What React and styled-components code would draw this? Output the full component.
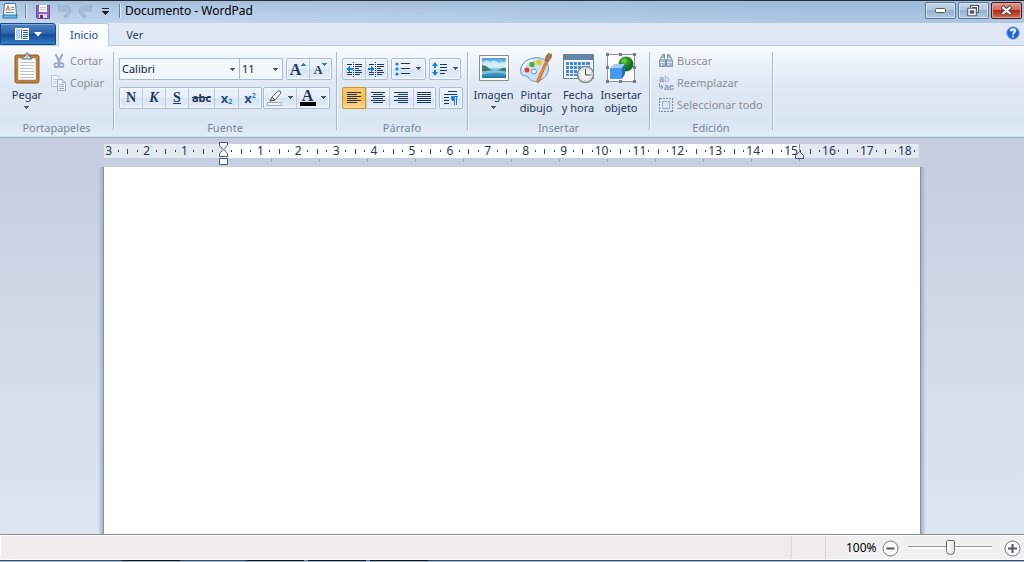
import React from 'react';
import styled, { createGlobalStyle, css } from 'styled-components';

const Global = createGlobalStyle`
  * { box-sizing: border-box; }
  body { margin: 0; background: #fff; font: 11px/14px "Noto Sans", "Open Sans", sans-serif; color: #1e395b; }
  button, select, input { font: inherit; color: inherit; margin: 0; padding: 0; border: 0; background: none; }
  svg { display: block; flex: none; }
`;

const Window = styled.div`
  display: flex;
  flex-direction: column;
  height: 100vh;
  min-height: 400px;
  margin-right: 3px;
  overflow: hidden;
`;

/* Title bar */
const TitleBar = styled.header`
  display: flex;
  align-items: center;
  height: 23px;
  flex: none;
  padding: 0 2px 2px;
  border-top: 1px solid #2c2e33;
  background: linear-gradient(90deg, #c3d6eb00 0, #c3d6eb00 20%, #8fb1d566 80%), linear-gradient(#a5c0dd, #b9cfe8 60%, #c2d6eb);
`;
const TitleDivider = styled.span`
  width: 2px;
  height: 14px;
  border-left: 1px solid #6e8199;
  border-right: 1px solid #dfeaf5;
  margin: 0 ${p => p.$right}px 0 ${p => p.$left}px;
`;
const QuickButton = styled.button`
  display: flex;
  align-items: center;
  justify-content: center;
  width: ${p => p.$w || 21}px;
  height: 20px;
`;
const Title = styled.h1`
  flex: 1;
  margin: 0;
  font-size: 12px;
  line-height: 18px;
  font-weight: 400;
  color: #000;
  white-space: nowrap;
`;
const Caption = styled.div`
  display: flex;
  gap: 2px;
  align-self: flex-start;
  margin-top: 1px;
`;
const CaptionButton = styled.button`
  display: flex;
  align-items: center;
  justify-content: center;
  width: 31px;
  height: 17px;
  border: 1px solid ${p => (p.$close ? '#4a1520' : '#5b7493')};
  border-radius: 2px;
  box-shadow: inset 0 0 0 1px ${p => (p.$close ? '#e2a29a' : '#d3e2f1')};
  background: ${p => (p.$close
    ? 'linear-gradient(#dc9c90, #cb6655 48%, #b12a17 50%, #cd6f4e)'
    : 'linear-gradient(#c4d5e8, #b0c6de 48%, #96b0cd 50%, #afc8e2)')};
`;

/* Tabs */
const Tabs = styled.nav`
  display: flex;
  height: 23px;
  flex: none;
  background: #dfe8f4;
  border-bottom: 1px solid #bacbdf;
`;
const FileButton = styled.button`
  display: flex;
  align-items: center;
  justify-content: center;
  gap: 5px;
  width: 56px;
  height: 22px;
  border: 1px solid #1b4785;
  border-radius: 0 3px 0 0;
  box-shadow: inset 0 1px 0 #83abd9;
  background: linear-gradient(#4b80c0, #2b62a9 48%, #174b94 52%, #2f7cc5);
`;
const Tab = styled.button`
  height: 23px;
  margin-left: ${p => (p.$active ? 2 : 4)}px;
  padding: 0 12px 1px;
  border: 1px solid transparent;
  border-bottom: 0;
  color: #1e395b;
  ${p => p.$active && css`
    padding: 0 10px 1px 11px;
    background: #fafdff;
    border-color: #bacbdf;
    border-radius: 3px 3px 0 0;
    color: #1e4a8a;
  `}
`;
const Help = styled.button`
  margin: 0 4px 2px auto;
`;

/* Ribbon */
const Ribbon = styled.section`
  display: flex;
  flex: none;
  height: 92px;
  padding-top: 6px;
  background: linear-gradient(#f8fcff, #eaf1f9 22%, #dfe8f4 42%, #dae5f3 85%, #e3edf8);
  border-bottom: 1px solid #9aaec3;
  box-shadow: inset 0 -1px 0 #cfe0ee;
`;
const Group = styled.section`
  display: flex;
  flex-direction: column;
  justify-content: space-between;
  flex: none;
  width: ${p => p.$w}px;
  height: 78px;
  padding-left: ${p => p.$pad}px;
  border-right: 1px solid #a9bbd2;
  box-shadow: 1px 0 0 #f3f8fd;
`;
const GroupLabel = styled.h2`
  margin: 0 0 -5px -${p => p.$pad}px;
  font-size: 11px;
  line-height: 14px;
  font-weight: 400;
  text-align: center;
  color: #76869d;
`;
const Row = styled.div`
  display: flex;
  gap: ${p => p.$gap || 0}px;
`;
const ToolRows = styled.div`
  display: flex;
  flex-direction: column;
  gap: 7px;
  padding-top: 6px;
`;
const BigButton = styled.button`
  display: flex;
  flex-direction: column;
  align-items: center;
  width: ${p => p.$w}px;
  line-height: 13px;
  white-space: pre;
  color: #1e395b;
  > svg:first-child { margin-bottom: 4px; }
  > svg + span + svg { margin-top: 5px; }
`;
const SmallList = styled.div`
  display: flex;
  flex-direction: column;
`;
const SmallButton = styled.button`
  display: flex;
  align-items: center;
  gap: 3px;
  height: 22px;
  margin-top: ${p => (p.$first ? -2 : 0)}px;
  color: #8c8f95;
  white-space: nowrap;
`;
const ComboBox = styled.label`
  position: relative;
  display: block;
  width: ${p => p.$w}px;
  height: 22px;
  margin-left: ${p => (p.$joined ? -1 : 0)}px;
  border: 1px solid #a9bcd5;
  background: #f2f7fc;
  > svg { position: absolute; right: 3px; top: 9px; pointer-events: none; }
`;
const Select = styled.select`
  appearance: none;
  width: 100%;
  height: 20px;
  padding-left: 2px;
  color: #10233d;
  outline: 0;
`;
const ButtonSet = styled.div`
  display: flex;
  height: 22px;
  border: 1px solid #a9bcd5;
  border-radius: 2px;
  box-shadow: inset 0 0 0 1px #f3f8fd;
  background: linear-gradient(#edf3fa, #e6eef8 48%, #d8e4f2 52%, #e4edf8);
`;
const Tool = styled.button`
  display: flex;
  align-items: center;
  justify-content: center;
  gap: 5px;
  width: ${p => p.$w || 24}px;
  height: 20px;
  color: #1e395b;
  & + & { border-left: 1px solid #bccbdf; }
  ${p => p.$on && css`
    height: 22px;
    margin: -1px 0 0 -1px;
    border: 1px solid #c29b29;
    border-radius: 2px 0 0 2px;
    background: linear-gradient(#fbc978, #fdbd58 48%, #fdb747 52%, #ffd991);
  `}
`;
const Letter = styled.span`
  font-family: "Liberation Serif", serif;
  font-size: ${p => p.$size || 14}px;
  line-height: 16px;
  font-weight: 700;
  font-style: ${p => (p.$italic ? 'italic' : 'normal')};
  text-decoration: ${p => p.$line || 'none'};
`;
const Abc = styled.span`
  font-size: 11px;
  line-height: 14px;
  font-weight: 700;
  text-decoration: line-through;
`;
const Script = styled.span`
  display: flex;
  align-items: ${p => (p.$up ? 'flex-start' : 'flex-end')};
  font-size: 13px;
  line-height: 13px;
  font-weight: 700;
  color: #2a5078;
  > i { font-size: 7px; line-height: 7px; font-style: normal; color: #1583dc; }
`;
const GrowLetter = styled.span`
  display: flex;
  align-items: flex-start;
  height: 20px;
  padding-top: 3px;
  > svg { margin-top: 1px; }
`;
const ColorLetter = styled.span`
  display: block;
  width: 16px;
  height: 16px;
  border-bottom: 4px solid #000;
  font: 700 16px/12px "Liberation Serif", serif;
  text-align: center;
`;

/* Document area */
const Workspace = styled.main`
  display: flex;
  flex-direction: column;
  align-items: center;
  flex: 1;
  min-height: 0;
  padding-top: 6px;
  background: linear-gradient(#c4cddf, #c6d0e1 12%, #dde7f2);
`;
const RulerBox = styled.div`
  position: relative;
  width: 816px;
  max-width: 100%;
  height: 23px;
  flex: none;
`;
const Ruler = styled.div`
  height: 14px;
  margin-right: 1px;
  overflow-x: clip;
  overflow-y: visible;
  background: linear-gradient(90deg, #e4e8f0 119px, #fff 119px 695px, #e4e8f0 695px);
`;
const Track = styled.div`
  display: grid;
  grid-template-columns: repeat(88, 1fr);
  width: 834px;
  height: 14px;
  margin-left: -19px;
  align-items: center;
  justify-items: center;
  font-size: 12px;
  line-height: 14px;
`;
const Mark = styled.span`
  display: flex;
  justify-content: center;
  width: ${p => (p.$text ? 'auto' : '1px')};
  height: ${p => (p.$text ? 14 : p.$tall ? 5 : 2)}px;
  background: ${p => (p.$text ? 'none' : '#29456b')};
  margin: 0 -8px;
`;
const TabStops = styled.div`
  height: 2px;
  margin: 1px 120px 0 119px;
  background: linear-gradient(90deg, #8e9bb1 1px, transparent 1px) 0 0 / 48px 2px;
`;
const Marker = styled.span`
  position: absolute;
  left: ${p => p.$x}px;
  top: ${p => p.$y}px;
`;
const PageWrap = styled.div`
  display: flex;
  flex: 1;
  width: 828px;
  max-width: 100%;
  min-height: 0;
`;
const Edge = styled.span`
  width: 6px;
  background: linear-gradient(${p => (p.$left ? 'to left' : 'to right')}, #8491a8 1px, #a3b0c6 1px, #a3b0c600);
`;
const Page = styled.article`
  flex: 1;
  background: #fff;
  outline: 0;
`;

/* Status bar */
const StatusBar = styled.footer`
  display: flex;
  align-items: flex-end;
  justify-content: flex-end;
  flex: none;
  height: 26px;
  border: 1px solid #fff;
  border-right: 0;
  border-top: 1px solid #8f8c91;
  box-shadow: inset 0 1px 0 #fff;
  background: #f0eceb;
  color: #000;
`;
const StatusCell = styled.span`
  width: 34px;
  height: 23px;
  border-left: 1px solid #dcd7d7;
`;
const Zoom = styled.div`
  display: flex;
  align-items: center;
  height: 23px;
  padding: 1px 3px 0 20px;
  border-left: 1px solid #dcd7d7;
  background: linear-gradient(90deg, #f0eceb, #f0f0f0 24px);
`;
const ZoomText = styled.label`
  width: 36px;
  font-size: 12px;
  white-space: nowrap;
`;
const Slider = styled.input`
  appearance: none;
  width: 84px;
  height: 18px;
  margin: -2px 12px 0 9px;
  &::-webkit-slider-runnable-track {
    height: 3px;
    border-top: 1px solid #9c9c9c;
    background: #fff;
  }
  &::-webkit-slider-thumb {
    appearance: none;
    width: 9px;
    height: 15px;
    margin-top: -7px;
    border: 1px solid #6b6b6b;
    border-radius: 2px 2px 5px 5px;
    background: linear-gradient(90deg, #fff, #e2e2e2);
  }
`;
const TaskbarEdge = styled.div`
  height: 2px;
  flex: none;
  background:
    linear-gradient(90deg, transparent 122px, #101318 122px 180px, transparent 180px 246px, #101318 246px 304px, #70879f 304px 308px, #101318 308px 366px, #70879f 366px 370px, #101318 370px 428px, transparent 428px) 0 0 / 100% 1px no-repeat,
    linear-gradient(#39495d 1px, #9db9d1 1px);
`;

const Arrow = ({ fill = '#46566e' }) => (
  <svg width="6" height="4" viewBox="0 0 6 4"><path d="M0 0h5v1H4v1H3v1H2V2H1V1H0z" fill={fill} shapeRendering="crispEdges" /></svg>
);
const FileGlyph = () => (
  <svg width="14" height="12" shapeRendering="crispEdges"><path d="M0 0h14v12H0z" fill="#fff" /><path d="M1 1h4v10H1z" fill="#b8d0ea" /><path d="M6 1h1v10H6z" fill="#4a78b4" /><path d="M8 2h5M8 4h5M8 6h5M8 8h5M8 10h4" stroke="#24549a" transform="translate(0 .5)" /></svg>
);
const AppGlyph = () => (
  <svg width="16" height="16"><path d="M2.500.500h11l1 11v3H1.500v-3z" fill="#f6fbff" stroke="#387cb5" /><path d="M1 12h14v3H1z" fill="#77b7df" stroke="#2871a8" /><path d="M4 8l2-5 2 5M5 6h2" stroke="#e57c22" fill="none" strokeWidth="1.200" /><path d="M9 4.500h3M9 6.500h3M4 9.500h8" stroke="#5191c8" /></svg>
);
const SaveGlyph = () => (
  <svg width="14" height="15"><path d="M.500 1.500h13v13h-12l-1-1z" fill="#9a66bd" stroke="#73449a" /><path d="M3 1h8v7H3z" fill="#f7f7fc" /><path d="M4 3.500h6M4 5.500h6" stroke="#c9c4d8" /><path d="M3 10h8v4H3z" fill="#d9d8e4" /><path d="M4 11h3v3H4z" fill="#51356e" /></svg>
);
const UndoGlyph = ({ flip }) => (
  <svg width="15" height="16" viewBox="0 0 15 16"><g transform={flip ? 'translate(15 0) scale(-1 1)' : undefined}><path d="M1 1l1 7h7L6.500 5.700C10 5 11 7 10 9.500c-.6 1.600-2 3-3 3.700l1 1.700c3-1 5.700-4 5.700-7C13.700 3 8 1 4 3.700z" fill="#a6bdd8" stroke="#93abc8" strokeWidth=".8" /></g></svg>
);
const CustomizeGlyph = () => (
  <svg width="7" height="7" shapeRendering="crispEdges"><path d="M0 0h7v1H0zM0 3h7v1H6v1H5v1H4v1H3V6H2V5H1V4H0z" fill="#18222f" /></svg>
);
const HelpGlyph = () => (
  <svg width="14" height="14"><circle cx="7" cy="7" r="6.300" fill="#2264d3" stroke="#8fb2e2" /><path d="M3 4a5 5 0 0 1 8 0c-1 2-6 2-8 0" fill="#79aaf2" /><path d="M5 5.200c.2-2.500 4.300-2.300 4 .1C8.800 6.700 7 6.700 7 8.600M7 9.800v1.500" fill="none" stroke="#fff" strokeWidth="1.700" /></svg>
);
const PasteGlyph = () => (
  <svg width="26" height="32"><rect x="1" y="3" width="24" height="28" rx="2" fill="#b9803a" stroke="#8a5c23" /><path d="M4 6h18v22H4z" fill="#fdfefe" stroke="#9d7a45" strokeWidth=".5" /><path d="M6 10.500h14M6 13.500h14M6 16.500h14M6 19.500h14M6 22.500h14M6 25.500h14" stroke="#b9c5c7" /><path d="M8 7c0-2 2-2 3-3 .5-4 4-4 4 0 1 1 3 1 3 3z" fill="#d9dde1" stroke="#5a6068" /><circle cx="13" cy="3.300" r="1" fill="#fff" stroke="#6b7178" strokeWidth=".6" /></svg>
);
const CutGlyph = () => (
  <svg width="16" height="16" fill="none" stroke="#97a9c2"><path d="M4.500 1l4.500 9M11.500 1L7 10" strokeWidth="2" /><circle cx="5.500" cy="12.200" r="2" strokeWidth="1.700" /><circle cx="10.500" cy="12.200" r="2" strokeWidth="1.700" /></svg>
);
const CopyGlyph = () => (
  <svg width="16" height="16" stroke="#9fb0c8" fill="#edf2f9"><path d="M.5.500h6l3 3v8h-9z" stroke="#b9c6d8" /><path d="M2 4.500h5M2 6.500h5M2 8.500h3" stroke="#c2cddd" /><path d="M6.500 4.500h5l3 3v8h-8z" /><path d="M11.500 4.500v3h3M8 9.500h5M8 11.500h5M8 13.500h5" /></svg>
);
const ImageGlyph = () => (
  <svg width="32" height="32"><defs><linearGradient id="sky" x2="0" y2="1"><stop stopColor="#3f9ade" /><stop offset=".45" stopColor="#d9f1fb" /><stop offset=".6" stopColor="#6fb3cf" /><stop offset="1" stopColor="#1b77b4" /></linearGradient></defs><path d="M1.500 3.500h29v25h-29z" fill="#fff" stroke="#8b8f93" /><path d="M4 6h24v20H4z" fill="url(#sky)" /><path d="M5 10q4-3 7 0 6-3 8 1 5-1 8-1v4H4z" fill="#e7f6fc" opacity=".7" /><path d="M4 13l4 1 4 3 4 2H4zM28 16l-4 0-5 3h9z" fill="#3d7a72" /><path d="M4 20q12-4 24 0v2q-12-3-24 1z" fill="#8ccfe2" opacity=".7" /></svg>
);
const PaintGlyph = () => (
  <svg width="32" height="32"><path d="M14 6C5 7-1 14 1 21c1 4 5 2 7 4 2 3 4 5 9 4 8-1 13-9 11-16-2-6-8-8-14-7z" fill="#c9e1f3" stroke="#6897bd" /><path d="M13 8C7 9 3 14 3 18" fill="none" stroke="#f1f9ff" strokeWidth="2" /><circle cx="7" cy="18" r="2.500" fill="#e4402f" /><circle cx="12" cy="12.500" r="2.700" fill="#51af37" /><circle cx="19" cy="10.500" r="2.700" fill="#f0c21c" /><circle cx="14" cy="19.500" r="2.500" fill="#eef6fc" stroke="#5b91bb" /><path d="M26 8l2 1-9 21q-3 2-2-2z" fill="#f08831" stroke="#c95d1a" strokeWidth=".7" /><path d="M25 8l1-4 3-3 1 2 2-1-1 4-3 4z" fill="#aa7444" stroke="#80532e" strokeWidth=".6" /></svg>
);
const DateGlyph = () => (
  <svg width="33" height="32"><path d="M1.500 2.500h30v24h-30z" fill="#f5faff" stroke="#64809e" /><path d="M2 3h29v5H2z" fill="#6684a5" /><path d="M4 10h24v14H4z" fill="#4889d5" /><path d="M4 13.500h24M4 17.500h24M4 21.500h24M7.500 10v14M11.500 10v14M15.500 10v14M19.500 10v14M23.500 10v14" stroke="#e4f1ff" /><circle cx="23.500" cy="22.500" r="8" fill="#f0f1f1" stroke="#858a8e" strokeWidth="1.500" /><circle cx="23.500" cy="22.500" r="6" fill="none" stroke="#8d9399" strokeDasharray="1 2.140" /><path d="M23.500 17v6h5" fill="none" stroke="#434a50" /></svg>
);
const ObjectGlyph = () => (
  <svg width="32" height="32"><defs><radialGradient id="ball" cx=".4" cy=".3"><stop stopColor="#8ad36b" /><stop offset=".5" stopColor="#2b9b27" /><stop offset="1" stopColor="#147019" /></radialGradient></defs><path d="M2.500 2.500h27v27h-27z" fill="#fdfdfe" stroke="#8e9297" /><circle cx="21" cy="12" r="7.500" fill="url(#ball)" /><path d="M5 16l4-4h11l-3 4z" fill="#a0d0fa" /><path d="M5 16h12v11H5z" fill="#479aec" /><path d="M17 16l3-4v10l-3 5z" fill="#1f6bbd" /><path d="M1 1h3v3H1zM14 1h3v3h-3zM28 1h3v3h-3zM1 14h3v3H1zM28 14h3v3h-3zM1 28h3v3H1zM14 28h3v3h-3zM28 28h3v3h-3z" fill="#777d84" /></svg>
);
const FindGlyph = () => (
  <svg width="16" height="16" fill="#a7b7cc" stroke="#8195b1"><path d="M3.500 3.500l1-2h2v4l1 1v7h-6v-6zM12.500 3.500l-1-2h-2v4l-1 1v7h6v-6z" /><path d="M2 9.500h5M9 9.500h5M3 5.500h3M10 5.500h3" stroke="#e3eaf3" /><path d="M3.500 11v1M10.500 11v1" stroke="#f4f8fc" /></svg>
);
const ReplaceGlyph = () => (
  <svg width="16" height="20" fontFamily="Liberation Sans" fontWeight="700" fontSize="9" fill="#8195b1"><text x="1" y="9">a<tspan fill="#b4c1d3">b</tspan></text><text x="6" y="17">ac</text><path d="M1.500 10v4h3M3 12l2 2-2 2" fill="none" stroke="#8195b1" /></svg>
);
const SelectGlyph = () => (
  <svg width="16" height="16" shapeRendering="crispEdges"><path d="M1.500 1.500h13v13h-13z" fill="none" stroke="#7589a7" strokeDasharray="2 1" /><path d="M4.500 4.500h7v7h-7z" fill="#dbe4f0" stroke="#a2b1c6" /></svg>
);
const Lines = ({ kind }) => {
  const rows = [14, 10, 14, 10, 14, 10];
  return (
    <svg width="15" height="13" shapeRendering="crispEdges">{rows.map((w, i) => {
      const width = kind === 'full' ? 14 : w;
      const x = kind === 'right' ? 14 - width : kind === 'center' ? (14 - width) / 2 : 0;
      return <rect key={i} x={x} y={i * 2} width={width} height="1" fill="#1e395b" />;
    })}</svg>
  );
};
const IndentGlyph = ({ right }) => (
  <svg width="17" height="15" shapeRendering="crispEdges"><path d="M1 2.500h5M9 2.500h7M9 4.500h7M9 6.500h4M9 8.500h6M1 10.500h5M9 10.500h7M1 12.500h5M9 12.500h5" stroke="#1e395b" /><path d="M7.500 0v15" stroke="#1e395b" strokeDasharray="1 1" /><path d={right ? 'M0 6h3V4l4 3-4 3V8H0z' : 'M7 6H4V4L0 7l4 3V8h3z'} fill="#1583dc" /></svg>
);
const BulletsGlyph = () => (
  <svg width="16" height="14"><circle cx="2" cy="2" r="1.600" fill="#1583dc" /><circle cx="2" cy="7" r="1.600" fill="#1583dc" /><circle cx="2" cy="12" r="1.600" fill="#1583dc" /><path d="M6 1.500h9M6 6.500h9M6 11.500h9" stroke="#1e395b" /></svg>
);
const SpacingGlyph = () => (
  <svg width="16" height="16"><path d="M0 5l3-4 3 4H4v2H2V5zM0 11l3 4 3-4H4V9H2v2z" fill="#1583dc" /><path d="M8 3.500h7M8 6.500h7M8 9.500h7M8 12.500h5" stroke="#1e395b" /></svg>
);
const ParagraphGlyph = () => (
  <svg width="15" height="14" shapeRendering="crispEdges"><path d="M4 .500h9M0 3.500h13M0 6.500h5M0 9.500h5M0 12.500h5" stroke="#1e395b" /><path d="M7 5h7v1h-1v8h-1V6h-1v8h-1v-4H8l-1-1z" fill="#1583dc" /></svg>
);
const GrowGlyph = ({ down }) => (
  <svg width="5" height="3" shapeRendering="crispEdges"><path d={down ? 'M0 0h5v1H4v1H3v1H2V2H1V1H0z' : 'M2 0h1v1h1v1h1v1H0V2h1V1h1z'} fill="#1583dc" /></svg>
);
const HighlightGlyph = () => (
  <svg width="17" height="17"><path d="M4 11l2-4 6-6q3-1 3 2l-6 7z" fill="#f4f7fa" stroke="#596c85" /><path d="M4 11l2-4 3 3z" fill="#dcc45c" stroke="#5d6672" /><path d="M1.500 12.500h14v3h-14z" fill="#edf2f8" stroke="#9fb0c8" /></svg>
);
const ZoomGlyph = ({ plus }) => (
  <svg width="17" height="17"><circle cx="8.500" cy="8.500" r="7.500" fill="#f8f8f8" stroke="#77777b" /><path d={plus ? 'M4 8.500h9M8.500 4v9' : 'M4.500 8.500h8'} stroke="#55565a" strokeWidth="2" /></svg>
);

const centimetres = Array.from({ length: 22 }, (_, i) => i - 3);

export default function App() {
  return (
    <>
      <Global />
      <Window>
        <TitleBar>
          <AppGlyph />
          <TitleDivider $left={7} $right={5} />
          <QuickButton aria-label="Guardar"><SaveGlyph /></QuickButton>
          <QuickButton aria-label="Deshacer" $w={22}><UndoGlyph /></QuickButton>
          <QuickButton aria-label="Rehacer" $w={20}><UndoGlyph flip /></QuickButton>
          <QuickButton aria-label="Personalizar" $w={20}><CustomizeGlyph /></QuickButton>
          <TitleDivider $left={4} $right={4} />
          <Title>Documento - WordPad</Title>
          <Caption>
            <CaptionButton aria-label="Minimizar"><svg width="12" height="5"><rect x=".5" y=".5" width="10" height="4" rx="1" fill="#fff" stroke="#4c5a6c" /></svg></CaptionButton>
            <CaptionButton aria-label="Restaurar"><svg width="13" height="12" fill="none"><path d="M4.500 1.500h6v5h-6z" stroke="#4c5a6c" strokeWidth="3" /><path d="M4.500 1.500h6v5h-6z" stroke="#fff" /><path d="M2 4.500h6v5H2z" stroke="#4c5a6c" strokeWidth="3.500" /><path d="M2 4.500h6v5H2z" fill="#4c5a6c" stroke="#fff" strokeWidth="1.500" /></svg></CaptionButton>
            <CaptionButton aria-label="Cerrar" $close><svg width="13" height="11"><path d="M2 1.500l9 8M11 1.500l-9 8" stroke="#593c43" strokeWidth="4" /><path d="M2.500 2l8 7M10.500 2l-8 7" stroke="#fff" strokeWidth="2.200" /></svg></CaptionButton>
          </Caption>
        </TitleBar>
        <Tabs>
          <FileButton aria-label="Menú"><FileGlyph /><svg width="8" height="5"><path d="M0 0h8L4 4.500z" fill="#fff" /></svg></FileButton>
          <Tab $active>Inicio</Tab>
          <Tab>Ver</Tab>
          <Help aria-label="Ayuda"><HelpGlyph /></Help>
        </Tabs>
        <Ribbon>
          <Group $w={114} $pad={5}>
            <Row $gap={2}>
              <BigButton $w={44}><PasteGlyph /><span>Pegar</span><Arrow /></BigButton>
              <SmallList>
                <SmallButton $first><CutGlyph />Cortar</SmallButton>
                <SmallButton><CopyGlyph />Copiar</SmallButton>
              </SmallList>
            </Row>
            <GroupLabel $pad={5}>Portapapeles</GroupLabel>
          </Group>
          <Group $w={223} $pad={5}>
            <ToolRows>
              <Row $gap={3}>
                <Row>
                  <ComboBox $w={121}><Select aria-label="Fuente"><option>Calibri</option></Select><Arrow /></ComboBox>
                  <ComboBox $w={44} $joined><Select aria-label="Tamaño"><option>11</option></Select><Arrow /></ComboBox>
                </Row>
                <ButtonSet>
                  <Tool $w={22} aria-label="Agrandar fuente"><GrowLetter><Letter $size={16}>A</Letter><GrowGlyph /></GrowLetter></Tool>
                  <Tool $w={22} aria-label="Reducir fuente"><GrowLetter><Letter $size={12}>A</Letter><GrowGlyph down /></GrowLetter></Tool>
                </ButtonSet>
              </Row>
              <Row $gap={1}>
                <ButtonSet>
                  <Tool $w={22}><Letter>N</Letter></Tool>
                  <Tool $w={23}><Letter $italic>K</Letter></Tool>
                  <Tool $w={23}><Letter $line="underline">S</Letter></Tool>
                  <Tool $w={26}><Abc>abc</Abc></Tool>
                  <Tool $w={24}><Script>x<i>2</i></Script></Tool>
                  <Tool $w={23}><Script $up>x<i>2</i></Script></Tool>
                </ButtonSet>
                <ButtonSet>
                  <Tool $w={32} aria-label="Resaltar"><HighlightGlyph /><Arrow /></Tool>
                  <Tool $w={33} aria-label="Color de texto"><ColorLetter>A</ColorLetter><Arrow /></Tool>
                </ButtonSet>
              </Row>
            </ToolRows>
            <GroupLabel $pad={5}>Fuente</GroupLabel>
          </Group>
          <Group $w={131} $pad={5}>
            <ToolRows>
              <Row $gap={3}>
                <ButtonSet>
                  <Tool $w={22} aria-label="Reducir sangría"><IndentGlyph /></Tool>
                  <Tool $w={22} aria-label="Aumentar sangría"><IndentGlyph right /></Tool>
                </ButtonSet>
                <ButtonSet><Tool $w={33} aria-label="Lista"><BulletsGlyph /><Arrow /></Tool></ButtonSet>
                <ButtonSet><Tool $w={30} aria-label="Interlineado"><SpacingGlyph /><Arrow /></Tool></ButtonSet>
              </Row>
              <Row $gap={3}>
                <ButtonSet>
                  <Tool $on aria-label="Izquierda"><Lines kind="left" /></Tool>
                  <Tool $w={23} aria-label="Centro"><Lines kind="center" /></Tool>
                  <Tool aria-label="Derecha"><Lines kind="right" /></Tool>
                  <Tool $w={22} aria-label="Justificar"><Lines kind="full" /></Tool>
                </ButtonSet>
                <ButtonSet><Tool $w={22} aria-label="Párrafo"><ParagraphGlyph /></Tool></ButtonSet>
              </Row>
            </ToolRows>
            <GroupLabel $pad={5}>Párrafo</GroupLabel>
          </Group>
          <Group $w={182} $pad={4}>
            <Row>
              <BigButton $w={43}><ImageGlyph /><span>Imagen</span><Arrow /></BigButton>
              <BigButton $w={42}><PaintGlyph /><span>{'Pintar\ndibujo'}</span></BigButton>
              <BigButton $w={42}><DateGlyph /><span>{'Fecha\ny hora'}</span></BigButton>
              <BigButton $w={44}><ObjectGlyph /><span>{'Insertar\nobjeto'}</span></BigButton>
            </Row>
            <GroupLabel $pad={4}>Insertar</GroupLabel>
          </Group>
          <Group $w={123} $pad={8}>
            <SmallList>
              <SmallButton $first><FindGlyph />Buscar</SmallButton>
              <SmallButton><ReplaceGlyph />Reemplazar</SmallButton>
              <SmallButton><SelectGlyph />Seleccionar todo</SmallButton>
            </SmallList>
            <GroupLabel $pad={8}>Edición</GroupLabel>
          </Group>
        </Ribbon>
        <Workspace>
          <RulerBox>
            <Ruler>
              <Track>
                {centimetres.map(n => (
                  <React.Fragment key={n}>
                    <Mark $tall /><Mark /><Mark $text>{n === 0 ? '' : Math.abs(n)}</Mark><Mark />
                  </React.Fragment>
                ))}
              </Track>
            </Ruler>
            <TabStops />
            <Marker $x={115} $y={-2}>
              <svg width="9" height="24" fill="#f3f5f8" stroke="#49597a"><path d="M.5.500h8v3l-3.500 4 3.500 4v3h-8v-3l3.500-4-3.500-4zM.5 16.500h8v6h-8z" /></svg>
            </Marker>
            <Marker $x={691} $y={0}>
              <svg width="9" height="15" fill="#e6eaf1" stroke="#49597a"><path d="M4.500 0v7" stroke="#8997ad" /><path d="M4.500 7.500l4 4v3h-8v-3z" /></svg>
            </Marker>
          </RulerBox>
          <PageWrap>
            <Edge $left />
            <Page contentEditable suppressContentEditableWarning aria-label="Documento" />
            <Edge />
          </PageWrap>
        </Workspace>
        <StatusBar>
          <StatusCell />
          <Zoom>
            <ZoomText htmlFor="zoom">100%</ZoomText>
            <button aria-label="Alejar"><ZoomGlyph /></button>
            <Slider id="zoom" type="range" min="0" max="100" defaultValue="50" />
            <button aria-label="Acercar"><ZoomGlyph plus /></button>
          </Zoom>
        </StatusBar>
        <TaskbarEdge />
      </Window>
    </>
  );
}
